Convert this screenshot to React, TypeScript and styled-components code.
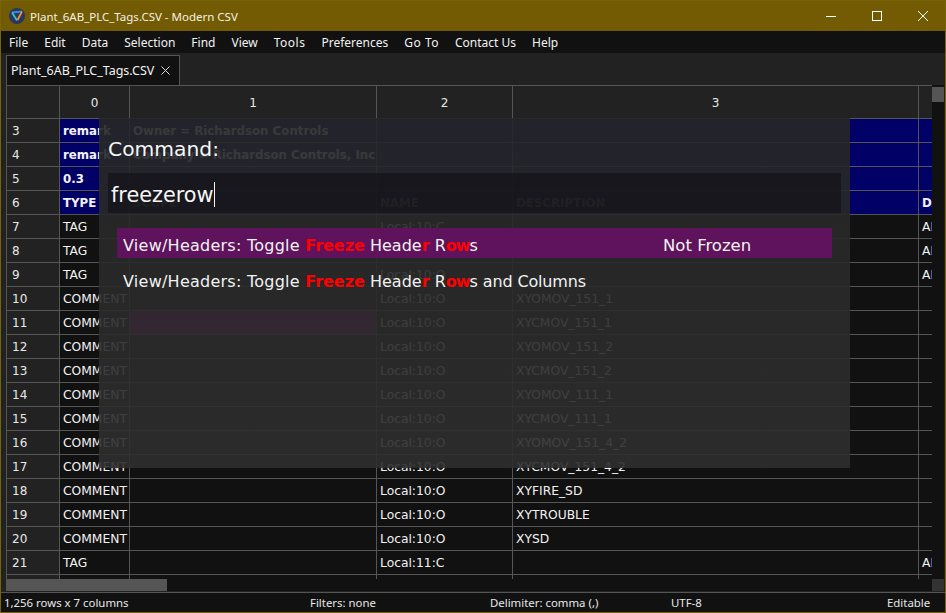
import styled, { createGlobalStyle } from 'styled-components';

const GlobalStyle = createGlobalStyle`
  html, body {
    margin: 0;
    padding: 0;
    background: #111;
  }
`;

const uiFont = `'Noto Sans', 'Open Sans', sans-serif`;
const wideFont = `'DejaVu Sans', Verdana, sans-serif`;

interface TagRow {
  num: number;
  cells: string[];
  head?: boolean;
  current?: boolean;
}

const comment = (num: number, name: string, current?: boolean): TagRow => ({
  num,
  cells: ['COMMENT', '', 'Local:10:O', name, ''],
  current,
});

const rows: TagRow[] = [
  { num: 3, head: true, cells: ['remark', 'Owner = Richardson Controls', '', '', ''] },
  { num: 4, head: true, cells: ['remark', 'Company = Richardson Controls, Inc', '', '', ''] },
  { num: 5, head: true, cells: ['0.3', '', '', '', ''] },
  { num: 6, head: true, cells: ['TYPE', 'SCOPE', 'NAME', 'DESCRIPTION', 'DATATYPE'] },
  { num: 7, cells: ['TAG', '', 'Local:10:C', '', 'AB:1756_DI'] },
  { num: 8, cells: ['TAG', '', 'Local:10:I', '', 'AB:1756_DI'] },
  { num: 9, cells: ['TAG', '', 'Local:10:O', '', 'AB:1756_DI'] },
  comment(10, 'XYOMOV_151_1'),
  comment(11, 'XYCMOV_151_1', true),
  comment(12, 'XYOMOV_151_2'),
  comment(13, 'XYCMOV_151_2'),
  comment(14, 'XYOMOV_111_1'),
  comment(15, 'XYCMOV_111_1'),
  comment(16, 'XYOMOV_151_4_2'),
  comment(17, 'XYCMOV_151_4_2'),
  comment(18, 'XYFIRE_SD'),
  comment(19, 'XYTROUBLE'),
  comment(20, 'XYSD'),
  { num: 21, cells: ['TAG', '', 'Local:11:C', '', 'AB:1756_DI'] },
];

const menus = [
  { label: 'File' },
  { label: 'Edit' },
  { label: 'Data' },
  { label: 'Selection' },
  { label: 'Find' },
  { label: 'View' },
  { label: 'Tools', loose: true },
  { label: 'Preferences' },
  { label: 'Go To', loose: true },
  { label: 'Contact Us' },
  { label: 'Help' },
];
const columns = ['0', '1', '2', '3', ''];

const ResultLabel = () => (
  <>
    <Prefix>View/Headers: Toggle </Prefix>
    <Hit>Freeze</Hit> Heade<Hit>r</Hit> R<TightHit>ow</TightHit>
  </>
);

const App = () => {
  return (
    <Window>
      <GlobalStyle />
      <TitleBar>
        <Logo viewBox="0 0 16 16">
          <circle cx="8" cy="8" r="8" fill="#2b3560" />
          <path d="M3 4.5 L13 3.5" stroke="#2f8fd8" strokeWidth="1.8" fill="none" />
          <path d="M3 4.5 L8 12.5" stroke="#35c4c8" strokeWidth="1.8" fill="none" />
          <path d="M13 3.5 L8.5 12" stroke="#ee8f35" strokeWidth="1.8" fill="none" />
        </Logo>
        <TitleText>Plant_6AB_PLC_Tags.CSV - Modern CSV</TitleText>
        <WindowButtons>
          <WindowButton viewBox="0 0 12 12">
            <path d="M1 6.5 H11" />
          </WindowButton>
          <WindowButton viewBox="0 0 12 12">
            <rect x="1.5" y="1.5" width="9" height="9" />
          </WindowButton>
          <WindowButton viewBox="0 0 12 12">
            <path d="M1 1 L11 11 M11 1 L1 11" />
          </WindowButton>
        </WindowButtons>
      </TitleBar>

      <MenuBar>
        {menus.map((m) => (
          <MenuItem key={m.label} $loose={m.loose}>
            {m.label}
          </MenuItem>
        ))}
      </MenuBar>

      <TabBar>
        <Tab>
          Plant_6AB_PLC_Tags.CSV
          <TabClose viewBox="0 0 9 9">
            <path d="M0.5 0.5 L8.5 8.5 M8.5 0.5 L0.5 8.5" />
          </TabClose>
        </Tab>
      </TabBar>

      <TableArea>
        <TableColumn>
          <Sheet>
            <HeaderRow>
              <HeaderCell />
              {columns.map((c, i) => (
                <HeaderCell key={i}>{c}</HeaderCell>
              ))}
            </HeaderRow>
            {rows.map((row) => (
              <Row key={row.num}>
                <RowNumber>{row.num}</RowNumber>
                {row.cells.map((cell, i) => (
                  <Cell key={i} $head={row.head} $current={row.current && i === 1}>
                    {cell}
                  </Cell>
                ))}
              </Row>
            ))}
            <StubRow>
              <StubCell />
              <StubCell />
              <StubCell />
              <StubCell />
              <StubCell />
              <StubCell />
            </StubRow>
          </Sheet>
          <HScroll>
            <HThumb />
          </HScroll>
        </TableColumn>
        <VScroll>
          <VThumb />
          <VTrack />
          <VCorner />
        </VScroll>
      </TableArea>

      <StatusBar>
        <span>1,256 rows x 7 columns</span>
        <span>Filters: none</span>
        <span>Delimiter: comma (,)</span>
        <span>UTF-8</span>
        <span>Editable</span>
      </StatusBar>

      <Palette>
        <PaletteTitle>Command:</PaletteTitle>
        <PaletteInput>
          freezerow
          <Caret />
        </PaletteInput>
        <Results>
          <Result $selected>
            <ResultName>
              <ResultLabel />s
            </ResultName>
            <ResultState>Not Frozen</ResultState>
          </Result>
          <Result>
            <ResultName>
              <ResultLabel />s<Tail> and Columns</Tail>
            </ResultName>
          </Result>
        </Results>
      </Palette>
    </Window>
  );
};

const Window = styled.div`
  position: relative;
  width: 946px;
  height: 613px;
  box-sizing: border-box;
  border: 1px solid #796308;
  background: #222;
  overflow: hidden;
  display: flex;
  flex-direction: column;
  color: #f2f2f2;
  font-family: ${uiFont};
`;

const TitleBar = styled.div`
  height: 30px;
  flex: none;
  background: #725b03;
  display: flex;
  align-items: center;
  padding-left: 8px;
`;

const Logo = styled.svg`
  width: 16px;
  height: 16px;
  margin-right: 5px;
`;

const TitleText = styled.div`
  font-size: 11.5px;
  color: #f4f1e4;
`;

const WindowButtons = styled.div`
  margin-left: auto;
  display: flex;
  gap: 34px;
  padding-right: 16px;
`;

const WindowButton = styled.svg`
  width: 12px;
  height: 12px;
  fill: none;
  stroke: #fff;
  stroke-width: 1;
`;

const MenuBar = styled.div`
  height: 22px;
  flex: none;
  background: #111;
  display: flex;
  align-items: center;
  padding-left: 8px;
  gap: 16px;
  font-size: 12px;
`;

const MenuItem = styled.div<{ $loose?: boolean }>`
  color: #f2f2f2;
  letter-spacing: ${(p) => (p.$loose ? '0.5px' : '0')};
`;

const TabBar = styled.div`
  height: 32px;
  flex: none;
  background: #222;
  padding: 2px 0 0 5px;
  box-sizing: border-box;
  display: flex;
`;

const Tab = styled.div`
  width: 174px;
  box-sizing: border-box;
  border: 1px solid #555;
  border-bottom: none;
  background: #111;
  display: flex;
  align-items: center;
  padding-left: 4px;
  gap: 7px;
  font-size: 12.5px;
`;

const TabClose = styled.svg`
  width: 9px;
  height: 9px;
  fill: none;
  stroke: #ddd;
  stroke-width: 1;
`;

const TableArea = styled.div`
  height: 507px;
  flex: none;
  display: flex;
  padding-left: 5px;
`;

const TableColumn = styled.div`
  width: 926px;
  display: flex;
  flex-direction: column;
`;

const Sheet = styled.div`
  height: 494px;
  flex: none;
  overflow: hidden;
  border-left: 1px solid #555;
  border-top: 1px solid #555;
  box-sizing: border-box;
  background: #111;
`;

const tracks = '53px 70px 247px 136px 406px 13px';

const HeaderRow = styled.div`
  display: grid;
  grid-template-columns: ${tracks};
  height: 33px;
  box-sizing: border-box;
  border-bottom: 1px solid #555;
  background: #222;
`;

const HeaderCell = styled.div`
  border-right: 1px solid #555;
  display: flex;
  align-items: center;
  justify-content: center;
  padding-top: 1px;
  font-family: ${wideFont};
  font-size: 12px;
  color: #e8e8e8;
  &:last-child {
    border-right: none;
  }
`;

const Row = styled.div`
  display: grid;
  grid-template-columns: ${tracks};
  height: 24px;
`;

const RowNumber = styled.div`
  border-right: 1px solid #555;
  border-bottom: 1px solid #555;
  background: #222;
  padding: 1px 0 0 5px;
  display: flex;
  align-items: center;
  font-family: ${wideFont};
  font-size: 12px;
  color: #e8e8e8;
`;

const Cell = styled.div<{ $head?: boolean; $current?: boolean }>`
  border-right: 1px solid #555;
  border-bottom: 1px solid #555;
  background: ${(p) => (p.$current ? '#80006e' : p.$head ? '#000066' : '#111')};
  padding-left: 3px;
  display: flex;
  align-items: center;
  white-space: nowrap;
  overflow: hidden;
  font-family: ${wideFont};
  font-size: ${(p) => (p.$head ? '11.8px' : '12.3px')};
  font-weight: ${(p) => (p.$head ? 700 : 400)};
  color: #f2f2f2;
  &:last-child {
    border-right: none;
  }
`;

const StubRow = styled.div`
  display: grid;
  grid-template-columns: ${tracks};
  height: 5px;
`;

const StubCell = styled.div`
  border-right: 1px solid #555;
  background: #111;
  &:first-child {
    background: #222;
  }
  &:last-child {
    border-right: none;
  }
`;

const HScroll = styled.div`
  height: 12px;
  flex: none;
  background: #111;
`;

const HThumb = styled.div`
  width: 161px;
  height: 100%;
  background: #555;
`;

const VScroll = styled.div`
  width: 12px;
  flex: none;
  display: flex;
  flex-direction: column;
  background: #111;
  padding-top: 2px;
  box-sizing: border-box;
  height: 506px;
`;

const VThumb = styled.div`
  height: 15px;
  flex: none;
  background: #555;
`;

const VTrack = styled.div`
  flex: 1;
`;

const VCorner = styled.div`
  height: 12px;
  flex: none;
  background: #333;
`;

const StatusBar = styled.div`
  height: 20px;
  flex: none;
  background: #111;
  border-top: 1px solid #555;
  box-sizing: border-box;
  display: grid;
  grid-template-columns: 306px 180px 181px 216px 1fr;
  align-items: center;
  padding-left: 3px;
  font-size: 11.4px;
  color: #e8e8e8;
`;

const Palette = styled.div`
  position: absolute;
  left: 98px;
  top: 117px;
  width: 751px;
  height: 350px;
  box-sizing: border-box;
  background: linear-gradient(rgba(38, 38, 38, 0.91), rgba(46, 46, 46, 0.91));
  padding: 14px 9px 0;
  display: flex;
  flex-direction: column;
  font-family: ${wideFont};
`;

const PaletteTitle = styled.div`
  font-size: 20.3px;
  line-height: 34px;
  height: 41px;
  color: #f6f6f6;
`;

const PaletteInput = styled.div`
  height: 40px;
  flex: none;
  box-sizing: border-box;
  background: rgba(15, 15, 18, 0.6);
  display: flex;
  align-items: center;
  padding: 3px 0 0 3px;
  font-size: 20.8px;
  color: #f6f6f6;
`;

const Caret = styled.span`
  width: 1px;
  height: 25px;
  background: #f6f6f6;
`;

const Results = styled.div`
  padding: 15px 9px 0;
  display: flex;
  flex-direction: column;
  gap: 6px;
`;

const Result = styled.div<{ $selected?: boolean }>`
  height: 30px;
  box-sizing: border-box;
  display: flex;
  align-items: center;
  padding: 4px 0 0 6px;
  background: ${(p) => (p.$selected ? '#5e135c' : 'transparent')};
  font-size: 16px;
  color: #f2f2f2;
`;

const ResultName = styled.div`
  width: 540px;
  flex: none;
  white-space: pre;
`;

const ResultState = styled.div`
  font-size: 16.5px;
`;

const Prefix = styled.span`
  letter-spacing: 0.25px;
`;

const Hit = styled.span`
  color: #ff0000;
  font-weight: 700;
`;

const TightHit = styled(Hit)`
  letter-spacing: -1px;
`;

const Tail = styled.span`
  letter-spacing: -0.15px;
`;

export default App;
